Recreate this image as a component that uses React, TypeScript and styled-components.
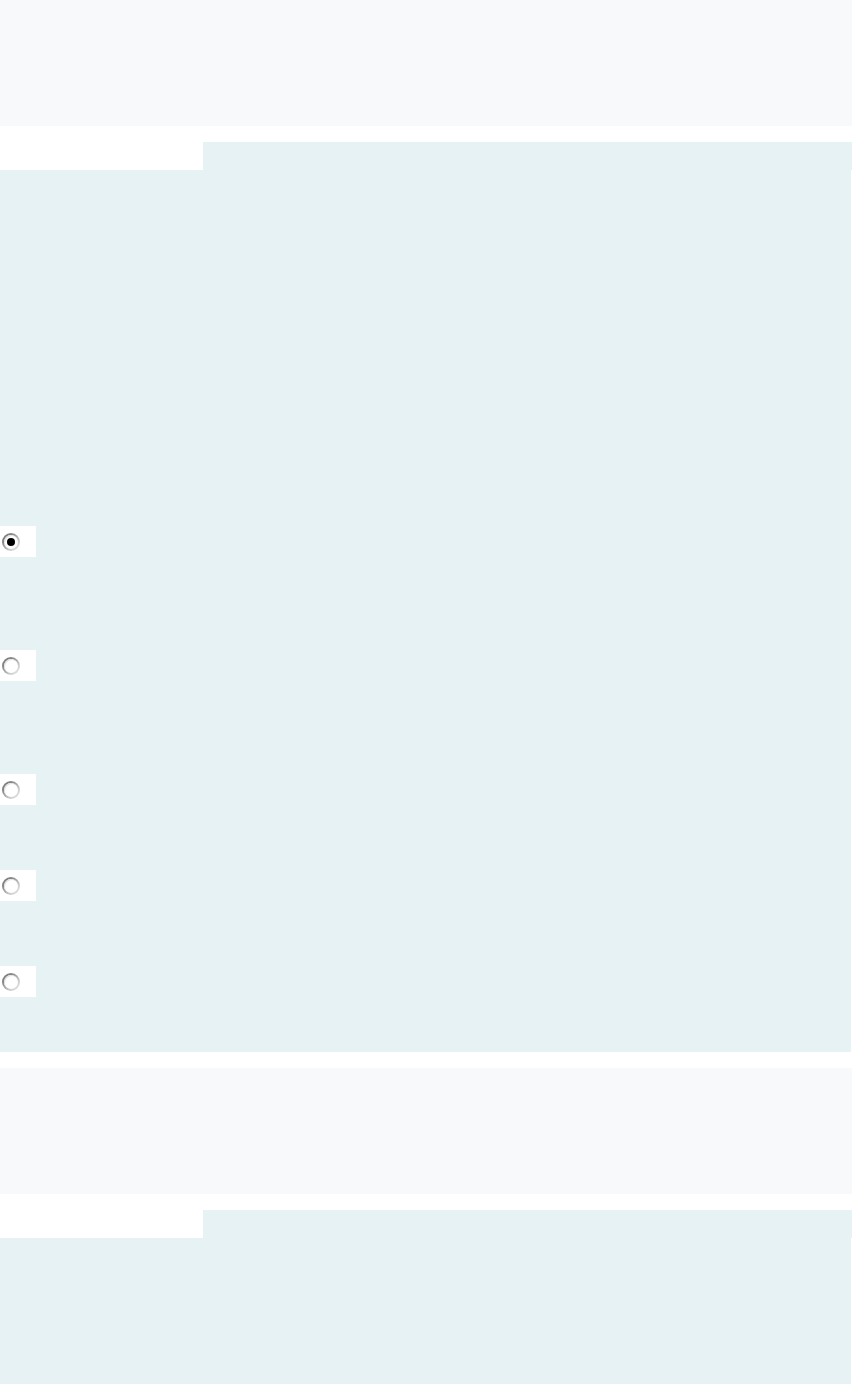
import React from "react";
import styled, { createGlobalStyle } from "styled-components";

const Global = createGlobalStyle`
  html, body { margin: 0; padding: 0; background: #ffffff; }
  body { font-family: "Liberation Sans", Arial, sans-serif; }
`;

const Page = styled.div`
  display: flex;
  flex-direction: column;
  width: 852px;
  gap: 16px;
`;

const Banner = styled.div`
  height: 126px;
  background: #f7f9fa;
`;

const Section = styled.section`
  display: flex;
  flex-direction: column;
`;

const TabRow = styled.div`
  display: flex;
  height: 28px;
`;

const TabSpacer = styled.div`
  width: 203px;
  background: #ffffff;
`;

const Tab = styled.div`
  flex: 1;
  background: #e6f2f3;
`;

const Panel = styled.div<{ $height: number; $padTop: number }>`
  width: 851px;
  height: ${(p) => p.$height}px;
  background: #e6f2f3;
  display: flex;
  flex-direction: column;
  padding-top: ${(p) => p.$padTop}px;
  box-sizing: border-box;
`;

const OptionRow = styled.div<{ $gap: number }>`
  margin-bottom: ${(p) => p.$gap}px;
`;

const RadioCell = styled.label`
  display: flex;
  align-items: center;
  width: 36px;
  height: 31px;
  background: #ffffff;
  padding-left: 2px;
  box-sizing: border-box;
`;

const RadioRing = styled.span`
  width: 18px;
  height: 18px;
  border-radius: 50%;
  background: linear-gradient(135deg, #6a6a6a 0%, #8e8e8e 35%, #cfcfcf 70%, #ececec 100%);
  display: flex;
  align-items: center;
  justify-content: center;
`;

const RadioFace = styled.span`
  width: 14px;
  height: 14px;
  border-radius: 50%;
  background: #ffffff;
  box-shadow: inset 1px 1px 0 #e2e2e2;
  display: flex;
  align-items: center;
  justify-content: center;
`;

const RadioDot = styled.span`
  width: 8px;
  height: 8px;
  border-radius: 50%;
  background: #000000;
`;

const Radio = ({ checked }: { checked?: boolean }) => (
  <RadioCell>
    <RadioRing>
      <RadioFace>{checked && <RadioDot />}</RadioFace>
    </RadioRing>
  </RadioCell>
);

const options = [
  { checked: true, gap: 93 },
  { checked: false, gap: 93 },
  { checked: false, gap: 65 },
  { checked: false, gap: 65 },
  { checked: false, gap: 0 },
];

export default function App() {
  return (
    <>
      <Global />
      <Page>
        <Banner />
        <Section>
          <TabRow>
            <TabSpacer />
            <Tab />
          </TabRow>
          <Panel $height={882} $padTop={356}>
            {options.map((o, i) => (
              <OptionRow key={i} $gap={o.gap}>
                <Radio checked={o.checked} />
              </OptionRow>
            ))}
          </Panel>
        </Section>
        <Banner />
        <Section>
          <TabRow>
            <TabSpacer />
            <Tab />
          </TabRow>
          <Panel $height={146} $padTop={0} />
        </Section>
      </Page>
    </>
  );
}
